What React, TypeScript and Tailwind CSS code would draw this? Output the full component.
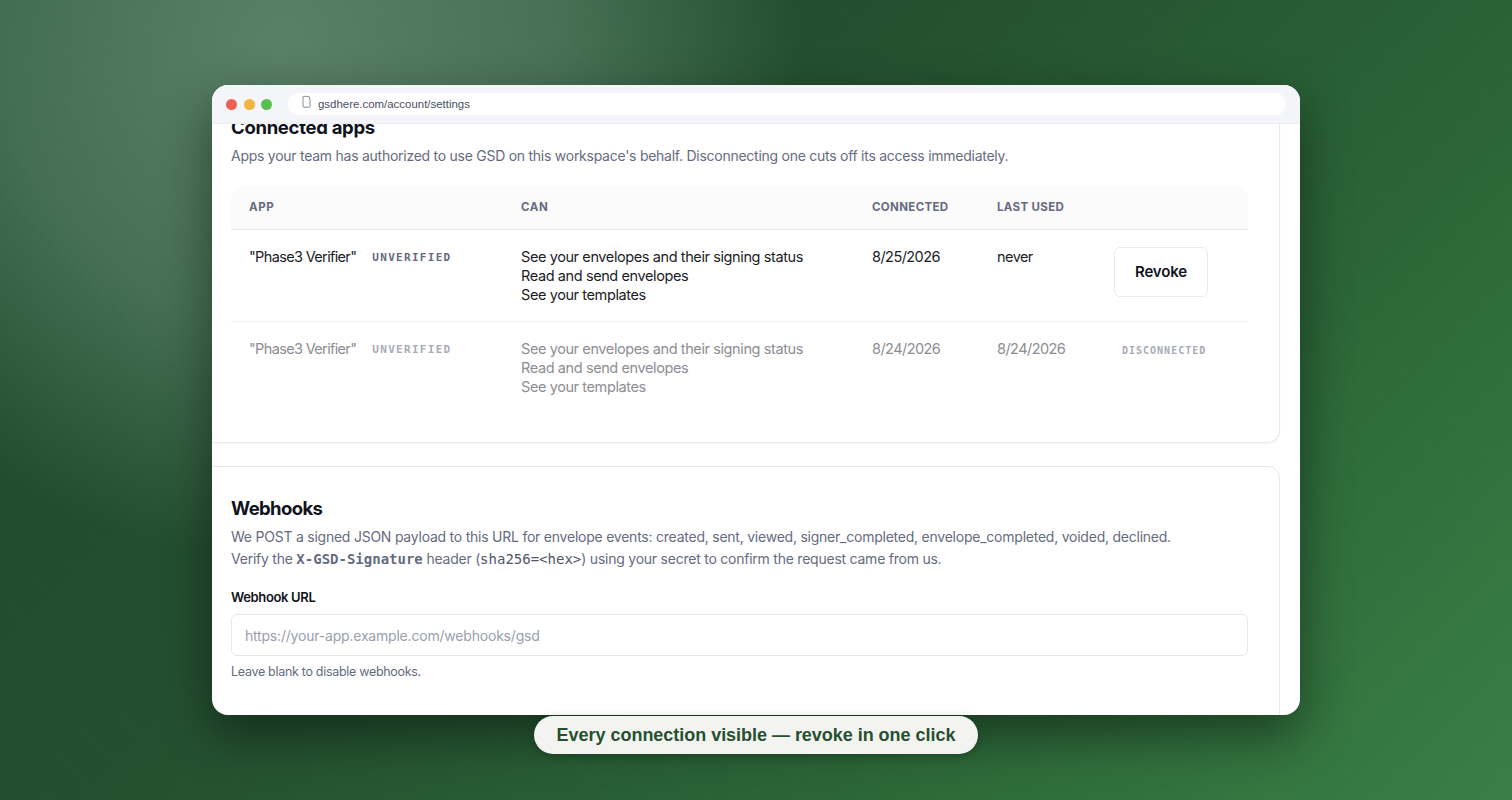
const sans = "font-['Inter',sans-serif]";
const mono = "font-['DejaVu_Sans_Mono',monospace]";

function Row({ dim, date, last, action }: { dim?: boolean; date: string; last: string; action: React.ReactNode }) {
  const tone = dim ? "text-[#8d8d93]" : "text-[#1b1d26]";
  return (
    <div className={`flex items-start pl-[18px] pt-[17px] text-[14.5px] leading-[19.2px] tracking-[-0.4px] ${tone}`}>
      <div className="w-[272px] flex items-start gap-[16px]">
        <span className="tracking-[-0.65px]">"Phase3 Verifier"</span>
        <span className={`${mono} font-bold text-[11px] tracking-[1.3px] leading-[22px] ${dim ? "text-[#a9abb7]" : "text-[#666a7f]"}`}>UNVERIFIED</span>
      </div>
      <div className="w-[351px]">
        <div>See your envelopes and their signing status</div>
        <div>Read and send envelopes</div>
        <div>See your templates</div>
      </div>
      <div className="w-[125px] tracking-[-0.55px]">{date}</div>
      <div className="w-[117px] tracking-[-0.55px]">{last}</div>
      {action}
    </div>
  );
}

export default function App() {
  return (
    <div className={`relative h-[800px] w-full overflow-hidden ${sans} flex flex-col items-center bg-[linear-gradient(135deg,#1b4a2b_0%,#245030_40%,#2b6537_70%,#3a7f46_100%)]`}>
      <div className="absolute inset-0 bg-[radial-gradient(circle_at_280px_40px,rgba(215,240,225,0.32)_0,rgba(215,240,225,0.21)_280px,rgba(215,240,225,0)_520px)]" />
      <div className="absolute inset-0 bg-[repeating-linear-gradient(45deg,rgba(255,255,255,0.012)_0,rgba(255,255,255,0.012)_1px,rgba(255,255,255,0)_1px,rgba(255,255,255,0)_36px)]" />

      <div className="relative mt-[85px] w-[1088px] h-[630px] rounded-[16px] overflow-hidden bg-white shadow-[0_20px_50px_rgba(0,0,0,0.45)] flex flex-col">
        <div className="h-[39px] shrink-0 bg-[#f4f5f8] border-b border-[#ebedf1] flex items-center pl-[14px] pr-[14px] z-10">
          <div className="flex gap-[6.7px]">
            <span className="w-[11px] h-[11px] rounded-full bg-[#ee5f57]" />
            <span className="w-[11px] h-[11px] rounded-full bg-[#f2b53f]" />
            <span className="w-[11px] h-[11px] rounded-full bg-[#58c04f]" />
          </div>
          <div className="ml-[15.6px] flex-1 h-[22px] rounded-full bg-white flex items-center pl-[14px] font-['Liberation_Sans',sans-serif] text-[11.45px] text-[#4a5060]">
            <svg width="9" height="13" viewBox="0 0 9 13" className="mr-[7px] -mt-[5px]" fill="none" stroke="#7c808c" strokeWidth="0.9">
              <path d="M1 5.2V11.6a.6.6 0 0 0 .6.6h5.8a.6.6 0 0 0 .6-.6V5.2M1 5.2V3.2A1.4 1.4 0 0 1 2.4 1.4h3.7a1.4 1.4 0 0 1 1.4 1.6l.5 2.2" />
            </svg>
            <span className="mt-[1px]">gsdhere.com/account/settings</span>
          </div>
        </div>

        <div className="flex-1 overflow-hidden">
          <div className="-mt-[10px] -ml-[20px] w-[1088px]">
            <section className="h-[329px] border border-[#e6e8ec] border-t-0 rounded-b-[12px] pl-[38px] pr-[31px] shadow-[0_1px_2px_rgba(0,0,0,0.04)]">
              <h2 className="text-[18.5px] font-bold leading-[26px] tracking-[-0.3px] text-[#10131c]">Connected apps</h2>
              <p className="mt-[6px] text-[14px] leading-[20px] tracking-[-0.26px] text-[#666b80]">
                Apps your team has authorized to use GSD on this workspace's behalf. Disconnecting one cuts off its access immediately.
              </p>
              <div className="mt-[20px] h-[44px] flex items-center pl-[18px] bg-[#fbfbfc] border-b border-[#e6e8ec] rounded-t-[12px] text-[11.5px] font-bold tracking-[0.35px] text-[#666a7f]">
                <div className="w-[272px] tracking-[0.65px]">APP</div>
                <div className="w-[351px] tracking-[0.65px]">CAN</div>
                <div className="w-[125px]">CONNECTED</div>
                <div>LAST USED</div>
              </div>
              <div className="h-[92px] border-b border-[#f1f2f4]">
                <Row
                  date="8/25/2026"
                  last="never"
                  action={
                    <button className="w-[94px] h-[50px] rounded-[6px] border border-[#e9eaee] bg-white text-[15px] font-semibold text-[#10131c] tracking-[-0.15px]">
                      Revoke
                    </button>
                  }
                />
              </div>
              <Row
                dim
                date="8/24/2026"
                last="8/24/2026"
                action={
                  <span className={`ml-[8px] ${mono} font-bold text-[10px] tracking-[1px] leading-[24px] text-[#a9abb7]`}>DISCONNECTED</span>
                }
              />
            </section>

            <section className="mt-[23px] h-[300px] border border-[#e6e8ec] rounded-t-[12px] pl-[38px] pr-[31px] pt-[28px]">
              <h2 className="text-[18.5px] font-bold leading-[26px] tracking-[-0.62px] text-[#10131c]">Webhooks</h2>
              <p className="mt-[5px] text-[14px] leading-[22px] tracking-[-0.235px] text-[#666b80]">
                We POST a signed JSON payload to this URL for envelope events: created, sent, viewed, signer_completed, envelope_completed, voided, declined.
                <br />
                Verify the <code className={`${mono} font-bold text-[14px] leading-none tracking-normal`}>X-GSD-Signature</code> header (<code className={`${mono} text-[14px] leading-none tracking-normal text-[#50556a]`}>sha256=&lt;hex&gt;</code>) using your secret to confirm the request came from us.
              </p>
              <label className="block mt-[18px] text-[13px] leading-[18px] font-semibold tracking-[-0.35px] text-[#10131c]">Webhook URL</label>
              <div className="mt-[8px] h-[42px] border border-[#e6e8ec] rounded-[6px] flex items-center pl-[13px] text-[14px] tracking-[-0.2px] text-[#9a9eae]">
                https://your-app.example.com/webhooks/gsd
              </div>
              <p className="mt-[7px] text-[12.5px] leading-[18px] tracking-[-0.3px] text-[#666b80]">Leave blank to disable webhooks.</p>
            </section>
          </div>
        </div>
      </div>

      <div className="absolute left-[534px] top-[716px] w-[444px] h-[38px] rounded-full bg-[#f3f4f2] flex items-center justify-center font-['Liberation_Sans',sans-serif] font-bold text-[18px] tracking-[-0.03px] text-[#27502f] shadow-[0_2px_8px_rgba(0,0,0,0.25)]">
        Every connection visible — revoke in one click
      </div>
    </div>
  );
}
